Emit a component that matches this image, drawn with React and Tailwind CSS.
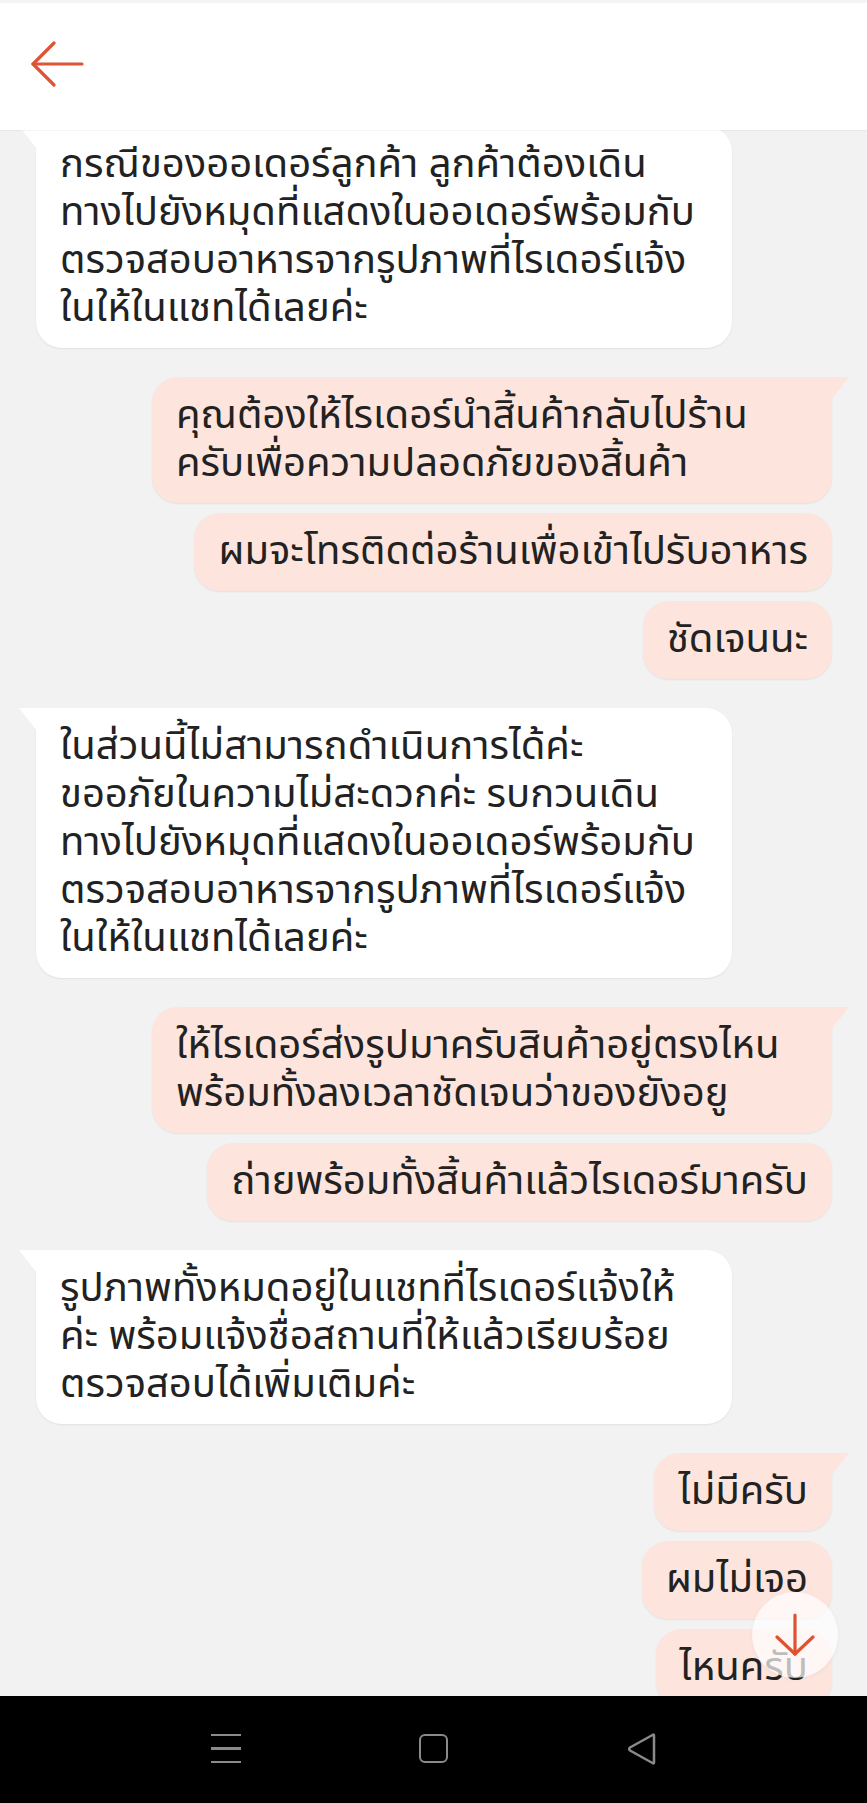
const agent = "agent";
const me = "me";

const messages = [
  { from: agent, tail: true, lines: ["กรณีของออเดอร์ลูกค้า ลูกค้าต้องเดิน", "ทางไปยังหมุดที่แสดงในออเดอร์พร้อมกับ", "ตรวจสอบอาหารจากรูปภาพที่ไรเดอร์แจ้ง", "ในให้ในแชทได้เลยค่ะ"] },
  { from: me, tail: true, wide: true, lines: ["คุณต้องให้ไรเดอร์นำสิ้นค้ากลับไปร้าน", "ครับเพื่อความปลอดภัยของสิ้นค้า"] },
  { from: me, lines: ["ผมจะโทรติดต่อร้านเพื่อเข้าไปรับอาหาร"] },
  { from: me, lines: ["ชัดเจนนะ"] },
  { from: agent, tail: true, lines: ["ในส่วนนี้ไม่สามารถดำเนินการได้ค่ะ", "ขออภัยในความไม่สะดวกค่ะ รบกวนเดิน", "ทางไปยังหมุดที่แสดงในออเดอร์พร้อมกับ", "ตรวจสอบอาหารจากรูปภาพที่ไรเดอร์แจ้ง", "ในให้ในแชทได้เลยค่ะ"] },
  { from: me, tail: true, wide: true, lines: ["ให้ไรเดอร์ส่งรูปมาครับสินค้าอยู่ตรงไหน", "พร้อมทั้งลงเวลาชัดเจนว่าของยังอยู"] },
  { from: me, lines: ["ถ่ายพร้อมทั้งสิ้นค้าแล้วไรเดอร์มาครับ"] },
  { from: agent, tail: true, lines: ["รูปภาพทั้งหมดอยู่ในแชทที่ไรเดอร์แจ้งให้", "ค่ะ พร้อมแจ้งชื่อสถานที่ให้แล้วเรียบร้อย", "ตรวจสอบได้เพิ่มเติมค่ะ"] },
  { from: me, tail: true, lines: ["ไม่มีครับ"] },
  { from: me, lines: ["ผมไม่เจอ"] },
  { from: me, lines: ["ไหนครับ"] },
];

function Bubble({ msg, first }) {
  const isMe = msg.from === me;
  const color = isMe ? "#fde5de" : "#ffffff";
  return (
    <div className={`flex ${isMe ? "justify-end pr-[35px]" : "justify-start pl-[36px]"} ${first ? "-mt-[4px]" : msg.tail ? "mt-[29px]" : "mt-[10px]"}`}>
      <div
        className={`relative py-[15px] px-6 text-[40px] leading-[48px] text-[#222] whitespace-nowrap shadow-[0_1px_2px_rgba(0,0,0,0.07)] ${
          isMe ? "bg-[#fde5de] rounded-[26px]" : "bg-white w-[696px] rounded-[26px]"
        } ${msg.wide ? "w-[680px]" : ""} ${msg.tail ? (isMe ? "rounded-tr-none" : "rounded-tl-none") : ""}`}
      >
        {msg.tail && (
          <svg
            width="18"
            height="23"
            viewBox="0 0 18 23"
            className={`absolute top-0 ${isMe ? "-right-[17px]" : "-left-[17px]"}`}
          >
            <polygon points={isMe ? "0,0 18,0 0,23" : "0,0 18,0 18,23"} fill={color} />
          </svg>
        )}
        {msg.lines.map((l, i) => (
          <div key={i}>{l}</div>
        ))}
      </div>
    </div>
  );
}

export default function App() {
  return (
    <div
      className="h-[1803px] w-[867px] flex flex-col bg-[#f2f2f2] overflow-hidden"
      style={{ fontFamily: '"Noto Sans Thai", "Noto Sans", "DejaVu Sans", sans-serif' }}
    >
      <header className="relative z-10 h-[130px] shrink-0 bg-white border-t-[3px] border-[#f4f4f4] flex items-center pl-[30px] shadow-[0_1px_1px_rgba(0,0,0,0.04)]">
        <svg width="54" height="46" viewBox="0 0 54 46" fill="none" stroke="#dd5536" strokeWidth="3.2" strokeLinecap="round" strokeLinejoin="round" className="-mt-[6px]">
          <path d="M3 23 H52" />
          <path d="M24 2 L3 23 L24 44" />
        </svg>
      </header>

      <main className="relative flex-1 overflow-hidden">
        {messages.map((m, i) => (
          <Bubble key={i} msg={m} first={i === 0} />
        ))}

        <div className="absolute right-[29px] bottom-[18px] w-[86px] h-[86px] rounded-full bg-white/70 shadow-[0_1px_4px_rgba(0,0,0,0.05)] flex items-center justify-center">
          <svg width="40" height="44" viewBox="0 0 40 44" fill="none" stroke="#e0512f" strokeWidth="3.2" strokeLinecap="round" strokeLinejoin="round">
            <path d="M20 2 V41" />
            <path d="M2 24 L20 41 L38 24" />
          </svg>
        </div>
      </main>

      <nav className="h-[107px] shrink-0 bg-black flex items-center">
        <div className="w-full flex items-center -mt-[2px]">
          <div className="ml-[211px] w-[30px] flex flex-col gap-[11px]">
            <span className="block h-[2.5px] bg-[#8a8a8a]" />
            <span className="block h-[2.5px] bg-[#8a8a8a]" />
            <span className="block h-[2.5px] bg-[#8a8a8a]" />
          </div>
          <div className="ml-[178px] w-[29px] h-[29px] rounded-[6px] border-[2.5px] border-[#8a8a8a]" />
          <svg width="30" height="32" viewBox="0 0 30 32" fill="none" stroke="#8a8a8a" strokeWidth="2.5" strokeLinejoin="round" className="ml-[179px]">
            <path d="M27 2.5 V29.5 Q27 31 25.5 30 L3 17.5 Q1.5 16 3 14.5 L25.5 2 Q27 1 27 2.5 Z" />
          </svg>
        </div>
      </nav>
    </div>
  );
}
